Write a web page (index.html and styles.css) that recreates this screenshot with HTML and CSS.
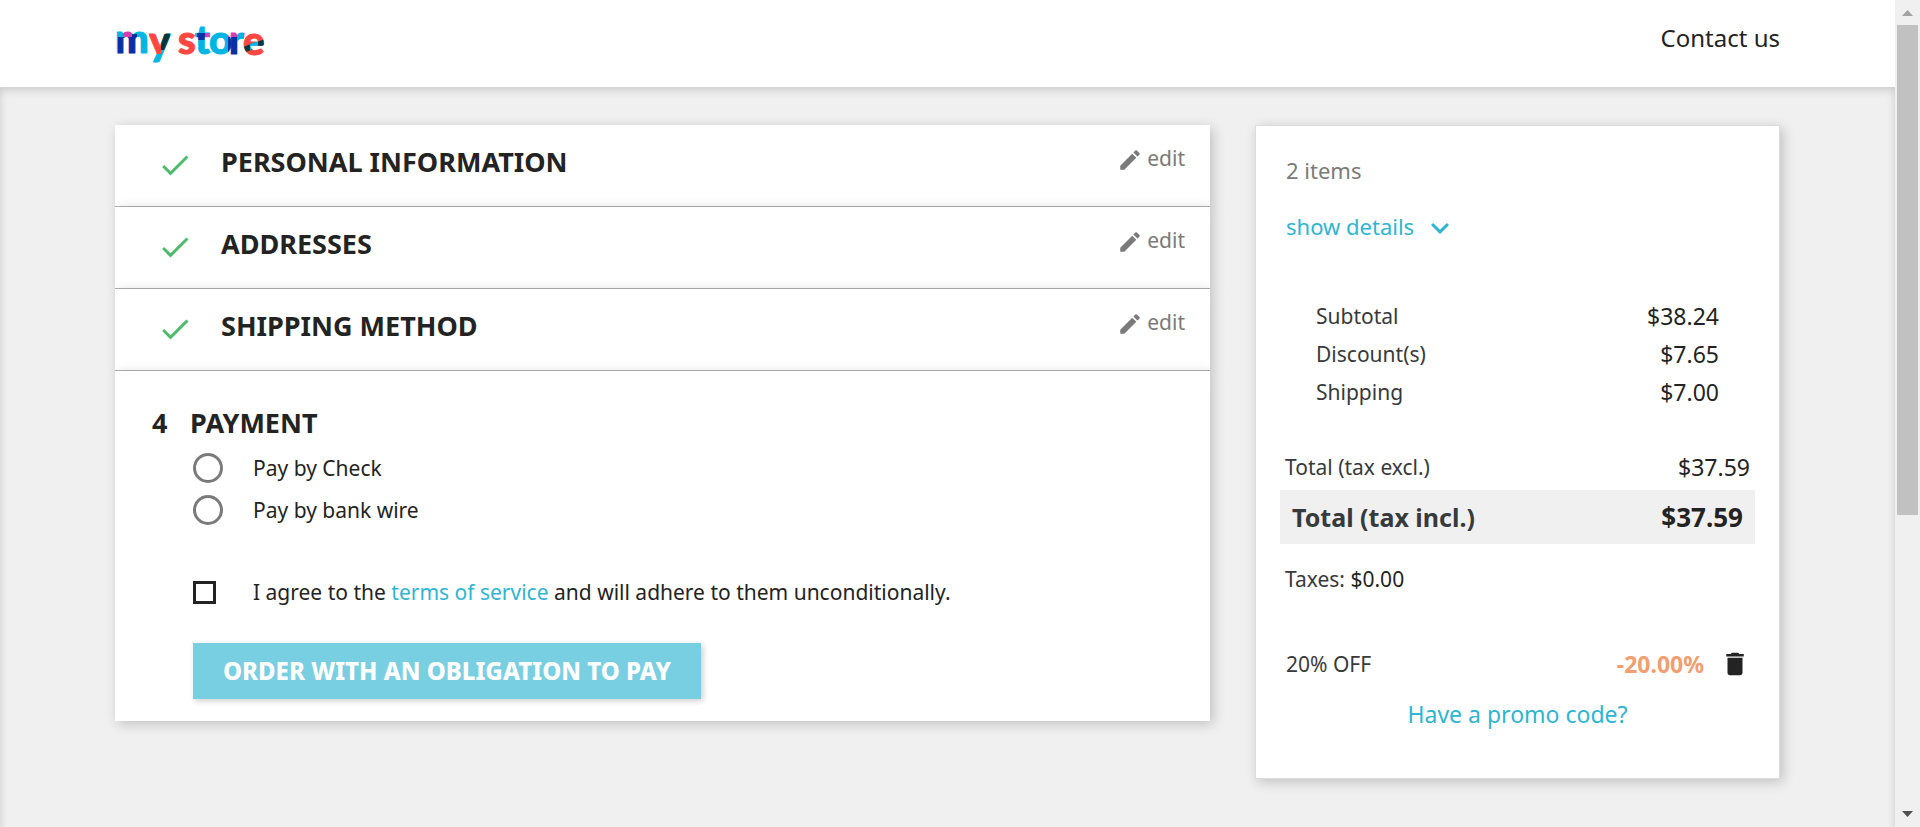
FILE: index.html
```html
<!DOCTYPE html>
<html lang="en">
<head>
<meta charset="utf-8">
<title>My Store - Checkout</title>
<link rel="stylesheet" href="styles.css">
</head>
<body>
<svg class="sprite" aria-hidden="true">
  <symbol id="check" viewBox="0 0 24 24"><path d="M9 16.2 4.8 12l-1.4 1.4L9 19 21 7l-1.4-1.4z"/></symbol>
  <symbol id="pencil" viewBox="0 0 24 24"><path d="M3 17.25V21h3.75L17.81 9.94l-3.75-3.75L3 17.25zM20.71 7.04a1 1 0 0 0 0-1.41l-2.34-2.34a1 1 0 0 0-1.41 0l-1.83 1.83 3.75 3.75 1.83-1.83z"/></symbol>
  <symbol id="chevron" viewBox="0 0 24 24"><path d="M16.59 8.59 12 13.17 7.41 8.59 6 10l6 6 6-6z"/></symbol>
  <symbol id="trash" viewBox="0 0 24 24"><path d="M6 19c0 1.1.9 2 2 2h8c1.100 0 2-.9 2-2V7H6v12zM19 4h-3.500l-1-1h-5l-1 1H5v2h14V4z"/></symbol>
</svg>
<div class="page">
  <header class="header">
    <div class="container header-row">
      <a class="logo" href="#" aria-label="my store">
        <svg class="logo-art" width="160" height="56" viewBox="0 0 160 56">
          <defs>
            <pattern id="paint" width="160" height="56" patternUnits="userSpaceOnUse">
              <rect width="160" height="56" fill="#00b5e2"/>
              <rect x="3" y="17" width="19" height="18" fill="#0a2ea4"/>
              <rect x="8" y="10" width="9" height="7" fill="#d93bb0"/>
              <rect x="17" y="14" width="5" height="4" fill="#0a2ea4"/>
              <rect x="34" y="10" width="12" height="24" fill="#ff4742"/>
              <rect x="46" y="10" width="9" height="20" fill="#003640"/>
              <rect x="61" y="10" width="19" height="26" fill="#ff4742"/>
              <rect x="82" y="13" width="8" height="7" fill="#0a2ea4"/>
              <rect x="90" y="13" width="4" height="7" fill="#d93bb0"/>
              <rect x="113" y="10" width="9" height="7" fill="#d93bb0"/>
              <rect x="113" y="17" width="9" height="20" fill="#0a2ea4"/>
              <rect x="128" y="10" width="22" height="28" fill="#ff4742"/>
              <path d="M128 27l22-8v6l-22 8z" fill="#003640"/>
              <path d="M135 24l8-3v6l-8 3z" fill="#00b5e2"/>
            </pattern>
          </defs>
          <text class="logo-text" x="0 34 63 80 94 114 128" y="33 35 34 34 34 34 35">mystore</text>
        </svg>
      </a>
      <a class="contact" href="#">Contact us</a>
    </div>
  </header>
  <main class="wrapper">
    <div class="container columns">
      <div class="steps">
        <section class="card step">
          <svg class="icon-check"><use href="#check"/></svg>
          <h1 class="title">PERSONAL INFORMATION</h1>
          <a class="edit" href="#"><svg class="icon-edit"><use href="#pencil"/></svg>edit</a>
        </section>
        <section class="card step">
          <svg class="icon-check"><use href="#check"/></svg>
          <h1 class="title">ADDRESSES</h1>
          <a class="edit" href="#"><svg class="icon-edit"><use href="#pencil"/></svg>edit</a>
        </section>
        <section class="card step">
          <svg class="icon-check"><use href="#check"/></svg>
          <h1 class="title">SHIPPING METHOD</h1>
          <a class="edit" href="#"><svg class="icon-edit"><use href="#pencil"/></svg>edit</a>
        </section>
        <section class="card payment">
          <h1 class="title payment-title"><span class="number">4</span>PAYMENT</h1>
          <form class="payment-form">
            <div class="option"><input class="radio" type="radio" name="pay" id="check-pay"><label for="check-pay">Pay by Check</label></div>
            <div class="option"><input class="radio" type="radio" name="pay" id="wire-pay"><label for="wire-pay">Pay by bank wire</label></div>
            <div class="option terms"><span class="box-cell"><input class="checkbox" type="checkbox" id="agree"></span><label for="agree">I agree to the <a href="#">terms of service</a> and will adhere to them unconditionally.</label></div>
            <button class="order" type="button">ORDER WITH AN OBLIGATION TO PAY</button>
          </form>
        </section>
      </div>
      <aside class="card summary">
        <p class="items">2 items</p>
        <a class="details" href="#">show details<svg class="icon-chevron"><use href="#chevron"/></svg></a>
        <div class="subtotals">
          <div class="line"><span>Subtotal</span><span class="value">$38.24</span></div>
          <div class="line"><span>Discount(s)</span><span class="value">$7.65</span></div>
          <div class="line"><span>Shipping</span><span class="value">$7.00</span></div>
        </div>
        <div class="line total-excl"><span>Total (tax excl.)</span><span class="value">$37.59</span></div>
        <div class="line total-incl"><span>Total (tax incl.)</span><span class="value">$37.59</span></div>
        <div class="taxes">Taxes: <span class="tax-value">$0.00</span></div>
        <div class="line voucher"><span>20% OFF</span><span class="reduction">-20.00%<button class="remove" type="button" aria-label="Remove voucher"><svg class="icon-trash"><use href="#trash"/></svg></button></span></div>
        <a class="promo" href="#">Have a promo code?</a>
      </aside>
    </div>
  </main>
</div>
<div class="scrollbar" aria-hidden="true">
  <svg class="arrow arrow-up" viewBox="0 0 11 6"><path d="M0 6 5.500 0 11 6z"/></svg>
  <div class="track"><div class="thumb"></div></div>
  <svg class="arrow arrow-down" viewBox="0 0 11 6"><path d="M0 0h11L5.500 6z"/></svg>
</div>
</body>
</html>
```
FILE: styles.css
```css
* { box-sizing: border-box; }
body {
  margin: 0;
  display: flex;
  min-height: 100vh;
  background: #f0f0f0;
  color: #232323;
  font: 21px/30px "Noto Sans", sans-serif;
}
h1, p { margin: 0; }
a { color: #2fb5d2; text-decoration: none; }
svg { display: block; fill: currentColor; }
.sprite { position: absolute; width: 0; height: 0; }

.page { flex: 1; display: flex; flex-direction: column; overflow: clip; }
.container { max-width: 1665px; margin: 0 auto; }
.header { background: #fff; height: 87px; }
.header-row { display: flex; justify-content: space-between; padding-top: 20px; }
.logo-art { overflow: visible; }
.logo-text {
  font: 900 40px Lato, sans-serif;
  fill: url(#paint);
  stroke: url(#paint);
  stroke-width: 1px;
  stroke-linejoin: round;
}
.contact { color: #232323; font-size: 24px; line-height: 36px; }
.wrapper {
  flex: 1;
  margin-bottom: -12px;
  padding: 38px 24px;
  box-shadow: inset 0 3px 8px rgba(0, 0, 0, 0.16);
}
.columns {
  display: grid;
  grid-template-columns: 1095fr 525fr;
  gap: 45px;
  align-items: start;
}
.card { background: #fff; box-shadow: 3px 3px 12px rgba(0, 0, 0, 0.2); }

.step {
  display: flex;
  align-items: flex-start;
  height: 82px;
  padding: 18px 25px 0 42px;
  border-bottom: 1px solid #b0b0b0;
}
.icon-check { width: 36px; height: 36px; margin: 4px 28px 0 0; color: #4cbb6c; }
.title { font-size: 27px; line-height: 32px; font-weight: 700; }
.step .title { flex: 1; margin-top: 3px; }
.edit { display: flex; align-items: center; gap: 4px; color: #7a7a7a; }
.icon-edit { width: 26px; height: 26px; margin-top: 4px; }

.payment { padding: 36px 37px 22px; }
.number { display: inline-block; width: 38px; }
.payment-form { padding: 8px 0 0 41px; }
.option { display: flex; align-items: center; height: 42px; }
.radio, .checkbox { appearance: none; margin: 0; background: #fff; }
.radio { width: 30px; height: 30px; margin-right: 30px; border: 3px solid #7a7a7a; border-radius: 50%; }
.box-cell { width: 60px; }
.checkbox { display: block; width: 23px; height: 23px; border: 3px solid #232323; }
.terms { margin-top: 40px; }
.order {
  display: block;
  height: 56px;
  margin-top: 30px;
  padding: 0 30px;
  border: 0;
  background: #79cfe2;
  color: #fff;
  font: 800 24px/30px "Noto Sans", sans-serif;
  box-shadow: 2px 2px 6px rgba(0, 0, 0, 0.2);
}

.summary { padding: 29px 24px 49px; border: 1px solid #dcdcdc; color: #373a3c; }
.items, .details { margin-left: 6px; font-size: 22px; }
.items { color: #7a7a7a; }
.details { display: flex; align-items: center; gap: 8px; height: 36px; margin-top: 23px; }
.icon-chevron { width: 36px; height: 36px; margin-top: 4px; }
.line { display: flex; justify-content: space-between; align-items: center; }
.value { color: #232323; font-size: 23px; }
.subtotals { margin-top: 53px; padding: 0 36px; line-height: 38px; }
.total-excl { margin-top: 41px; padding: 0 5px; }
.total-incl { height: 54px; margin-top: 8px; padding: 0 12px; background: #f0f0f0; font-size: 25px; font-weight: 700; }
.total-incl .value { font-size: 26px; }
.taxes { margin: 20px 0 0 5px; }
.tax-value { color: #232323; }
.voucher { margin-top: 55px; padding: 0 5px 0 6px; }
.reduction { display: flex; align-items: center; gap: 16px; color: #f39d72; font-size: 23px; font-weight: 700; }
.remove { padding: 0; border: 0; background: none; color: #232323; }
.icon-trash { width: 30px; height: 30px; }
.promo { display: block; margin-top: 20px; text-align: center; font-size: 23px; }

.scrollbar {
  position: sticky;
  top: 0;
  display: flex;
  flex-direction: column;
  width: 25px;
  height: 100vh;
  padding: 10px 2px;
  background: #f0f0f0;
}
.arrow { width: 11px; height: 6px; margin: 0 auto; }
.arrow-up { color: #a3a3a3; }
.arrow-down { color: #505050; }
.track { flex: 1; margin: 9px 0; }
.thumb { width: 21px; height: 63%; background: #c1c1c1; }
```
